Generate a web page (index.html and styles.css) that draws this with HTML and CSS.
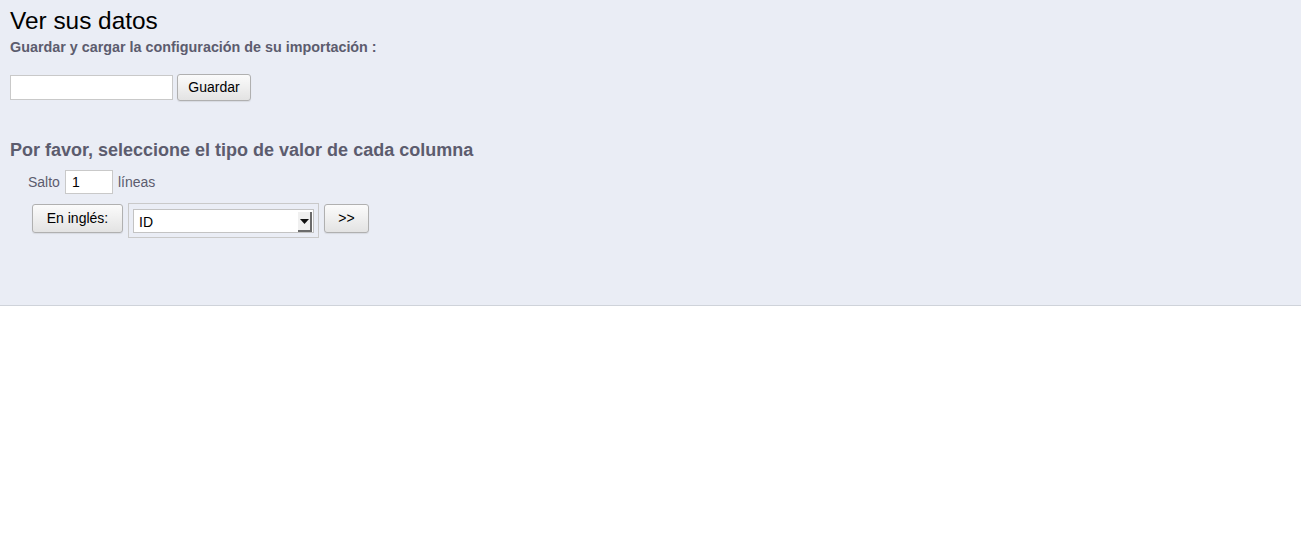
FILE: index.html
```html
<!DOCTYPE html>
<html lang="es">
<head>
<meta charset="utf-8">
<title>Ver sus datos</title>
<link rel="stylesheet" href="styles.css">
</head>
<body>
<div class="panel">
  <h1 class="title">Ver sus datos</h1>
  <h3 class="subtitle">Guardar y cargar la configuración de su importación :</h3>
  <div class="save-row">
    <input class="text-input name-input" type="text">
    <button class="btn save-btn">Guardar</button>
  </div>
  <h2 class="section-title">Por favor, seleccione el tipo de valor de cada columna</h2>
  <div class="skip-row">
    <span class="label">Salto</span>
    <input class="text-input skip-input" type="text" value="1">
    <span class="label">líneas</span>
  </div>
  <div class="col-row">
    <button class="btn lang-btn">En inglés:</button>
    <div class="select-wrap">
      <div class="fake-select">
        <span class="select-value">ID</span>
        <span class="select-arrow">
          <svg width="9" height="5" viewBox="0 0 9 5"><path d="M0 0H9L4.5 5Z" fill="#111"/></svg>
        </span>
      </div>
    </div>
    <button class="btn next-btn">&gt;&gt;</button>
  </div>
</div>
</body>
</html>
```
FILE: styles.css
```css
html, body {
  margin: 0;
  padding: 0;
  background: #ffffff;
  font-family: "Liberation Sans", Arial, sans-serif;
}
.panel {
  background: #eaedf5;
  border-bottom: 1px solid #cfd3da;
  height: 306px;
  box-sizing: border-box;
  padding: 7px 10px 0 10px;
}
.title {
  margin: 0;
  font-size: 24.4px;
  font-weight: normal;
  color: #000;
  line-height: 28px;
}
.subtitle {
  margin: 4px 0 0 0;
  font-size: 14.35px;
  font-weight: bold;
  color: #5c5c6e;
  line-height: 16px;
}
.save-row {
  display: flex;
  align-items: center;
  gap: 4px;
  margin-top: 19px;
}
.text-input {
  box-sizing: border-box;
  border: 1px solid #c9c9c9;
  background: #fff;
  font-family: "Liberation Sans", Arial, sans-serif;
  font-size: 14px;
  padding: 0 6px;
  margin: 0;
  outline: none;
  color: #000;
}
.name-input {
  width: 163px;
  height: 25px;
}
.btn {
  box-sizing: border-box;
  border: 1px solid #b0b0b0;
  border-radius: 3px;
  background: linear-gradient(#fbfbfb, #e3e3e3);
  font-family: "Liberation Sans", Arial, sans-serif;
  font-size: 14px;
  color: #000;
  padding: 0 6px 2px 6px;
  margin: 0;
  box-shadow: 0 1px 1px rgba(0,0,0,0.08);
}
.save-btn {
  width: 74px;
  height: 27px;
}
.section-title {
  margin: 39px 0 0 0;
  font-size: 18px;
  font-weight: bold;
  color: #5c5c6e;
  line-height: 20px;
}
.skip-row {
  display: flex;
  align-items: center;
  gap: 5px;
  margin: 10px 0 0 18px;
}
.label {
  font-size: 14px;
  color: #5c5c6e;
}
.skip-input {
  width: 48px;
  height: 24px;
}
.col-row {
  display: flex;
  align-items: flex-start;
  gap: 5px;
  margin: 9px 0 0 22px;
}
.lang-btn {
  width: 91px;
  height: 29px;
  margin-top: 1px;
}
.select-wrap {
  border: 1px solid #c9c9c9;
  padding: 5px 4px 4px 4px;
  width: 191px;
  box-sizing: border-box;
}
.fake-select {
  display: flex;
  align-items: center;
  justify-content: space-between;
  height: 24px;
  box-sizing: border-box;
  border: 1px solid #c3c3c3;
  background: #fff;
  padding-left: 5px;
}
.select-value {
  font-size: 14px;
  color: #000;
  padding-top: 2px;
}
.select-arrow {
  display: flex;
  align-items: center;
  justify-content: center;
  width: 14px;
  height: 20px;
  box-sizing: border-box;
  border-right: 2px solid #6b6b6b;
  border-bottom: 2px solid #6b6b6b;
  background: #f0f0f0;
  margin-right: 1px;
  align-self: flex-end;
}
.next-btn {
  width: 45px;
  height: 29px;
  margin-top: 1px;
}
```
